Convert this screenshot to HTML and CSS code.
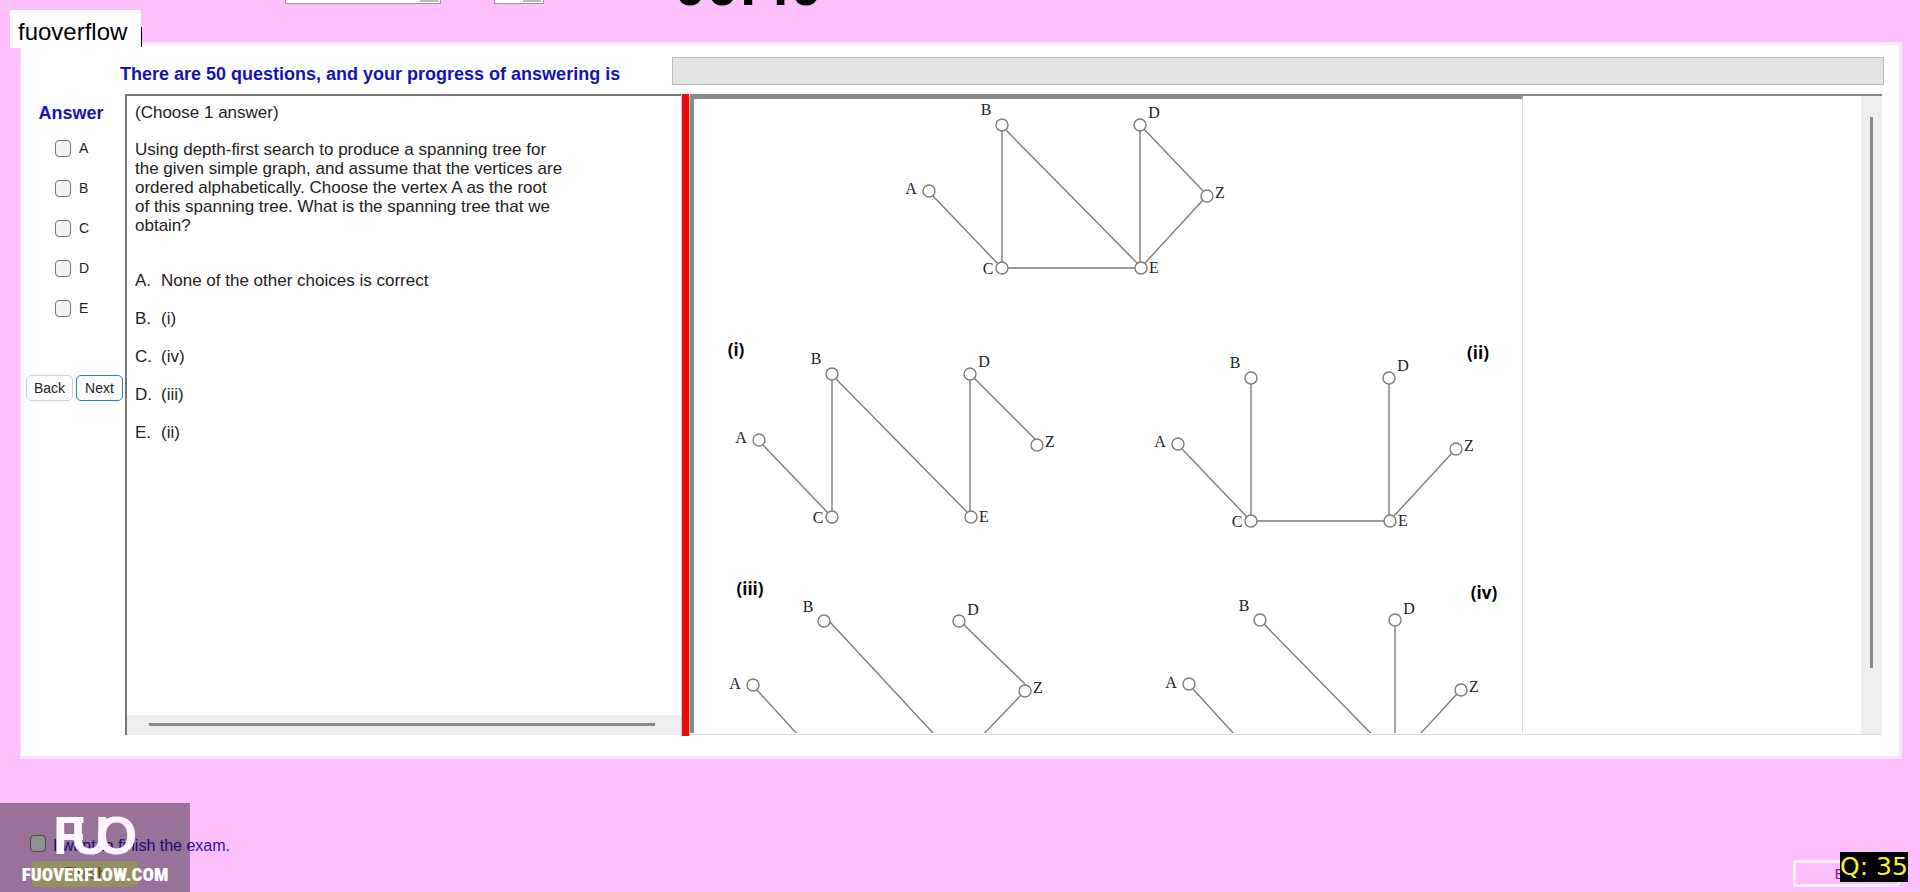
FILE: index.html
```
<!DOCTYPE html>
<html lang="en">

<head>
	<meta charset="utf-8">
	<title>Exam</title>
	<link rel="stylesheet" href="styles.css">
</head>

<body>
	<header class="toolbar">
		<select class="font-select" aria-label="Font"><option></option></select>
		<select class="size-select" aria-label="Size"><option></option></select>
		<div class="timer">00:40</div>
	</header>

	<div class="user-label">fuoverflow</div>

	<main class="exam">
		<div class="progress-row">
			<span class="progress-text">There are 50 questions, and your progress of answering is</span>
			<div class="progress-bar"></div>
		</div>

		<div class="workspace">
			<form class="answers">
				<h2>Answer</h2>
				<label><input type="checkbox" name="answer" value="A">A</label>
				<label><input type="checkbox" name="answer" value="B">B</label>
				<label><input type="checkbox" name="answer" value="C">C</label>
				<label><input type="checkbox" name="answer" value="D">D</label>
				<label><input type="checkbox" name="answer" value="E">E</label>
				<div class="nav-buttons">
					<button type="button">Back</button>
					<button type="button" class="focused">Next</button>
				</div>
			</form>

			<section class="question">
				<div class="question-text">
					<p>(Choose 1 answer)</p>
					<p>Using depth-first search to produce a spanning tree for<br>
						the given simple graph, and assume that the vertices are<br>
						ordered alphabetically. Choose the vertex A as the root<br>
						of this spanning tree. What is the spanning tree that we<br>
						obtain?</p>
					<ul class="choices">
						<li><span>A.</span>None of the other choices is correct</li>
						<li><span>B.</span>(i)</li>
						<li><span>C.</span>(iv)</li>
						<li><span>D.</span>(iii)</li>
						<li><span>E.</span>(ii)</li>
					</ul>
				</div>
				<div class="scroll-x"></div>
			</section>

			<div class="splitter"></div>

			<section class="picture">
				<div class="picture-view">
					<svg class="graphs" width="833" height="637" viewBox="4 5 828 634">
						<!-- given graph -->
						<g>
							<path d="M243 102L308 170M312 37V168M316 36L447 169M450 37V168M454 35L513 97M513 106L455 169M318 174H445" />
							<circle cx="239" cy="97" r="6" /><circle cx="312" cy="31" r="6" /><circle cx="312" cy="174" r="6" />
							<circle cx="450" cy="31" r="6" /><circle cx="451" cy="174" r="6" /><circle cx="517" cy="102" r="6" />
							<text x="221" y="100">A</text><text x="296" y="21">B</text><text x="298" y="180">C</text>
							<text x="464" y="24">D</text><text x="464" y="179">E</text><text x="530" y="104">Z</text>
						</g>
						<!-- (i) -->
						<g transform="translate(-170 249)">
							<path d="M243 102L308 170M312 37V168M316 36L447 169M450 37V168M454 35L516 97" />
							<circle cx="239" cy="97" r="6" /><circle cx="312" cy="31" r="6" /><circle cx="312" cy="174" r="6" />
							<circle cx="450" cy="31" r="6" /><circle cx="451" cy="174" r="6" /><circle cx="517" cy="102" r="6" />
							<text x="221" y="100">A</text><text x="296" y="21">B</text><text x="298" y="180">C</text>
							<text x="464" y="24">D</text><text x="464" y="179">E</text><text x="530" y="104">Z</text>
						</g>
						<!-- (ii) -->
						<g transform="translate(249 253)">
							<path d="M243 102L308 170M312 37V168M450 37V168M513 106L455 169M318 174H445" />
							<circle cx="239" cy="97" r="6" /><circle cx="312" cy="31" r="6" /><circle cx="312" cy="174" r="6" />
							<circle cx="450" cy="31" r="6" /><circle cx="451" cy="174" r="6" /><circle cx="517" cy="102" r="6" />
							<text x="221" y="100">A</text><text x="296" y="21">B</text><text x="298" y="180">C</text>
							<text x="464" y="24">D</text><text x="464" y="179">E</text><text x="530" y="104">Z</text>
						</g>
						<!-- (iii) -->
						<g transform="translate(63 591)">
							<path d="M4 5L67 74M76 -64L206 76M210 -61L272 -1M269 9L205 76" />
							<circle cx="0" cy="0" r="6" /><circle cx="71" cy="-64" r="6" />
							<circle cx="206" cy="-64" r="6" /><circle cx="272" cy="6" r="6" />
							<text x="-18" y="4">A</text><text x="55" y="-73">B</text>
							<text x="220" y="-70">D</text><text x="285" y="8">Z</text>
						</g>
						<!-- (iv) -->
						<g transform="translate(499 590)">
							<path d="M4 5L67 74M75 -60L206 74M206 -59V76M268 10L207 76" />
							<circle cx="0" cy="0" r="6" /><circle cx="71" cy="-64" r="6" />
							<circle cx="206" cy="-64" r="6" /><circle cx="272" cy="6" r="6" />
							<text x="-18" y="4">A</text><text x="55" y="-73">B</text>
							<text x="220" y="-70">D</text><text x="285" y="8">Z</text>
						</g>
						<g class="captions">
							<text x="46" y="262">(i)</text>
							<text x="788" y="265">(ii)</text>
							<text x="60" y="501">(iii)</text>
							<text x="794" y="505">(iv)</text>
						</g>
					</svg>
				</div>
				<div class="scroll-y"></div>
			</section>
		</div>
	</main>

	<footer class="bottom">
		<div class="finish">
			<label><input type="checkbox" name="finish">I want to finish the exam.</label>
			<button type="button" class="finish-button">Finish</button>
		</div>
		<button type="button" class="exit-button">Exit</button>
	</footer>

	<div class="watermark">
		<svg class="logo" width="190" height="46" viewBox="0 0 190 46">
			<text x="53" y="42">F</text>
			<text x="71" y="42">U</text>
			<text x="96" y="42">O</text>
		</svg>
		<span>FUOVERFLOW.COM</span>
	</div>
	<div class="question-number">Q: 35</div>
</body>

</html>
```
FILE: styles.css
```
* {
	box-sizing: border-box;
}

body {
	margin: 0;
	min-height: 100vh;
	position: relative;
	overflow: hidden;
	background-color: #fdbffd;
	font-family: "Liberation Sans", Arial, sans-serif;
	color: #222;
}

button,
select {
	font-family: inherit;
}

/* top */
.toolbar {
	display: flex;
	align-items: flex-end;
	height: 4px;
	padding-left: 285px;
}

.toolbar select {
	appearance: none;
	height: 28px;
	border: 1px solid #999;
	background: linear-gradient(#bbb, #bbb) right 2px top 0 / 18px 25px no-repeat white;
}

.font-select {
	width: 156px;
	margin-right: 53px;
}

.size-select {
	width: 50px;
	margin-right: 130px;
}

.timer {
	font-size: 58px;
	font-weight: bold;
	line-height: 38px;
	color: black;
}

.user-label {
	position: absolute;
	left: 10px;
	top: 10px;
	width: 131px;
	height: 38px;
	padding-left: 8px;
	background-color: white;
	color: black;
	font-size: 24px;
	line-height: 44px;
}

.user-label::after {
	content: "";
	position: absolute;
	right: -1px;
	top: 17px;
	width: 1px;
	height: 20px;
	background-color: black;
}

/* exam panel */
.exam {
	margin: 38px 18px 0 20px;
	padding: 12px 15px 20px 4px;
	background-color: white;
	border: 3px solid #f5e6f8;
	border-left-width: 1px;
}

.progress-row {
	display: flex;
	align-items: flex-end;
	gap: 40px;
	padding-left: 95px;
}

.progress-text {
	min-width: 512px;
	font-size: 18px;
	font-weight: bold;
	line-height: 22px;
	color: #1414b4;
	white-space: nowrap;
}

.progress-bar {
	flex: 1;
	height: 28px;
	background-color: #e4e4e4;
	border: 1px solid #b9b9b9;
}

.workspace {
	display: grid;
	grid-template-columns: 100px minmax(0, 556fr) 9px minmax(0, 1192fr);
	height: 642px;
	margin: 9px 2px 0 0;
}

.answers h2 {
	margin: 8px 0 14px;
	font-size: 18px;
	line-height: 22px;
	color: #1414b4;
	text-align: center;
	padding-right: 8px;
}

.answers label {
	display: flex;
	align-items: center;
	gap: 8px;
	height: 20px;
	margin-bottom: 20px;
	padding-left: 30px;
	font-size: 14px;
}

input[type="checkbox"] {
	appearance: none;
	width: 16px;
	height: 17px;
	margin: 0;
	border: 1px solid #777;
	border-radius: 4px;
	background-color: #f2f2f2;
}

.nav-buttons {
	display: flex;
	gap: 3px;
	padding-left: 1px;
	margin-top: 57px;
}

.nav-buttons button {
	width: 47px;
	height: 26px;
	padding: 0;
	border: 1px solid #d0d0d0;
	border-radius: 5px;
	background-color: #fdfdfd;
	font-size: 14px;
	color: #222;
}

.nav-buttons .focused {
	border-color: #2a80b9;
}

.question {
	display: flex;
	flex-direction: column;
	justify-content: space-between;
	margin: 0 0 1px;
	border-left: 2px solid #777;
	border-top: 2px solid #777;
}

.question-text {
	padding: 7px 8px;
	font-size: 17px;
	line-height: 19px;
}

.question-text p {
	margin: 0 0 18px;
}

.choices {
	display: flex;
	flex-direction: column;
	gap: 19px;
	margin: 36px 0 0;
	padding: 0;
	list-style: none;
}

.choices span {
	display: inline-block;
	width: 26px;
}

.scroll-x {
	height: 20px;
	padding: 8px 26px 0 22px;
	background-color: #eee;
}

.scroll-x::before {
	content: "";
	display: block;
	height: 3px;
	background-color: #888;
}

.splitter {
	background-color: #e60c0c;
	border: solid #f4b8b8;
	border-width: 0 1px;
}

.picture {
	display: flex;
	margin: 0 0 1px;
	border-top: 2px solid #888;
	border-bottom: 1px solid #ddd;
}

.picture-view {
	flex: 1;
	overflow: hidden;
}

.graphs {
	display: block;
	border-left: 4px solid #888;
	border-top: 3px solid #888;
	border-right: 1px solid #ddd;
}

.graphs path,
.graphs circle {
	fill: none;
	stroke: #7c7c7c;
	stroke-width: 1.4;
}

.graphs circle {
	fill: white;
}

.graphs text {
	font-family: "Liberation Serif", "Times New Roman", serif;
	font-size: 16px;
	text-anchor: middle;
	fill: #222;
}

.graphs .captions text {
	font-family: "Open Sans", sans-serif;
	font-size: 17px;
	font-weight: bold;
	fill: black;
}

.scroll-y {
	width: 21px;
	padding: 21px 9px 66px;
	background-color: #eee;
}

.scroll-y::before {
	content: "";
	display: block;
	height: 100%;
	background-color: #888;
}

/* bottom */
.bottom {
	display: flex;
	justify-content: space-between;
	align-items: flex-end;
	padding: 76px 20px 0 30px;
}

.finish label {
	display: flex;
	align-items: flex-start;
	gap: 7px;
	font-size: 16px;
	line-height: 22px;
	color: #2a10c0;
}

.finish-button {
	display: block;
	width: 106px;
	height: 26px;
	margin: 4px 0 0 2px;
	border: none;
	border-radius: 4px;
	background-color: #f8f0a4;
	color: #807820;
	font-size: 16px;
}

.exit-button {
	width: 107px;
	height: 27px;
	border: 3px solid #fff0ff;
	border-radius: 4px;
	background-color: transparent;
	color: #80108c;
	font-size: 14px;
}

.watermark {
	position: absolute;
	left: 0;
	bottom: 0;
	width: 190px;
	height: 89px;
	padding-top: 9px;
	background-color: rgba(0, 0, 0, 0.4);
	color: white;
	text-align: center;
}

.logo {
	display: block;
	fill: #fff6ff;
	font-size: 53px;
	font-weight: bold;
}

.watermark span {
	display: block;
	font-family: "Roboto Condensed", Roboto, sans-serif;
	font-size: 19px;
	font-weight: 900;
	line-height: 34px;
}

.question-number {
	position: absolute;
	right: 12px;
	bottom: 10px;
	width: 68px;
	height: 30px;
	background-color: black;
	color: #f5f03c;
	font-family: "DejaVu Sans", sans-serif;
	font-size: 25px;
	line-height: 30px;
	white-space: nowrap;
}
```
